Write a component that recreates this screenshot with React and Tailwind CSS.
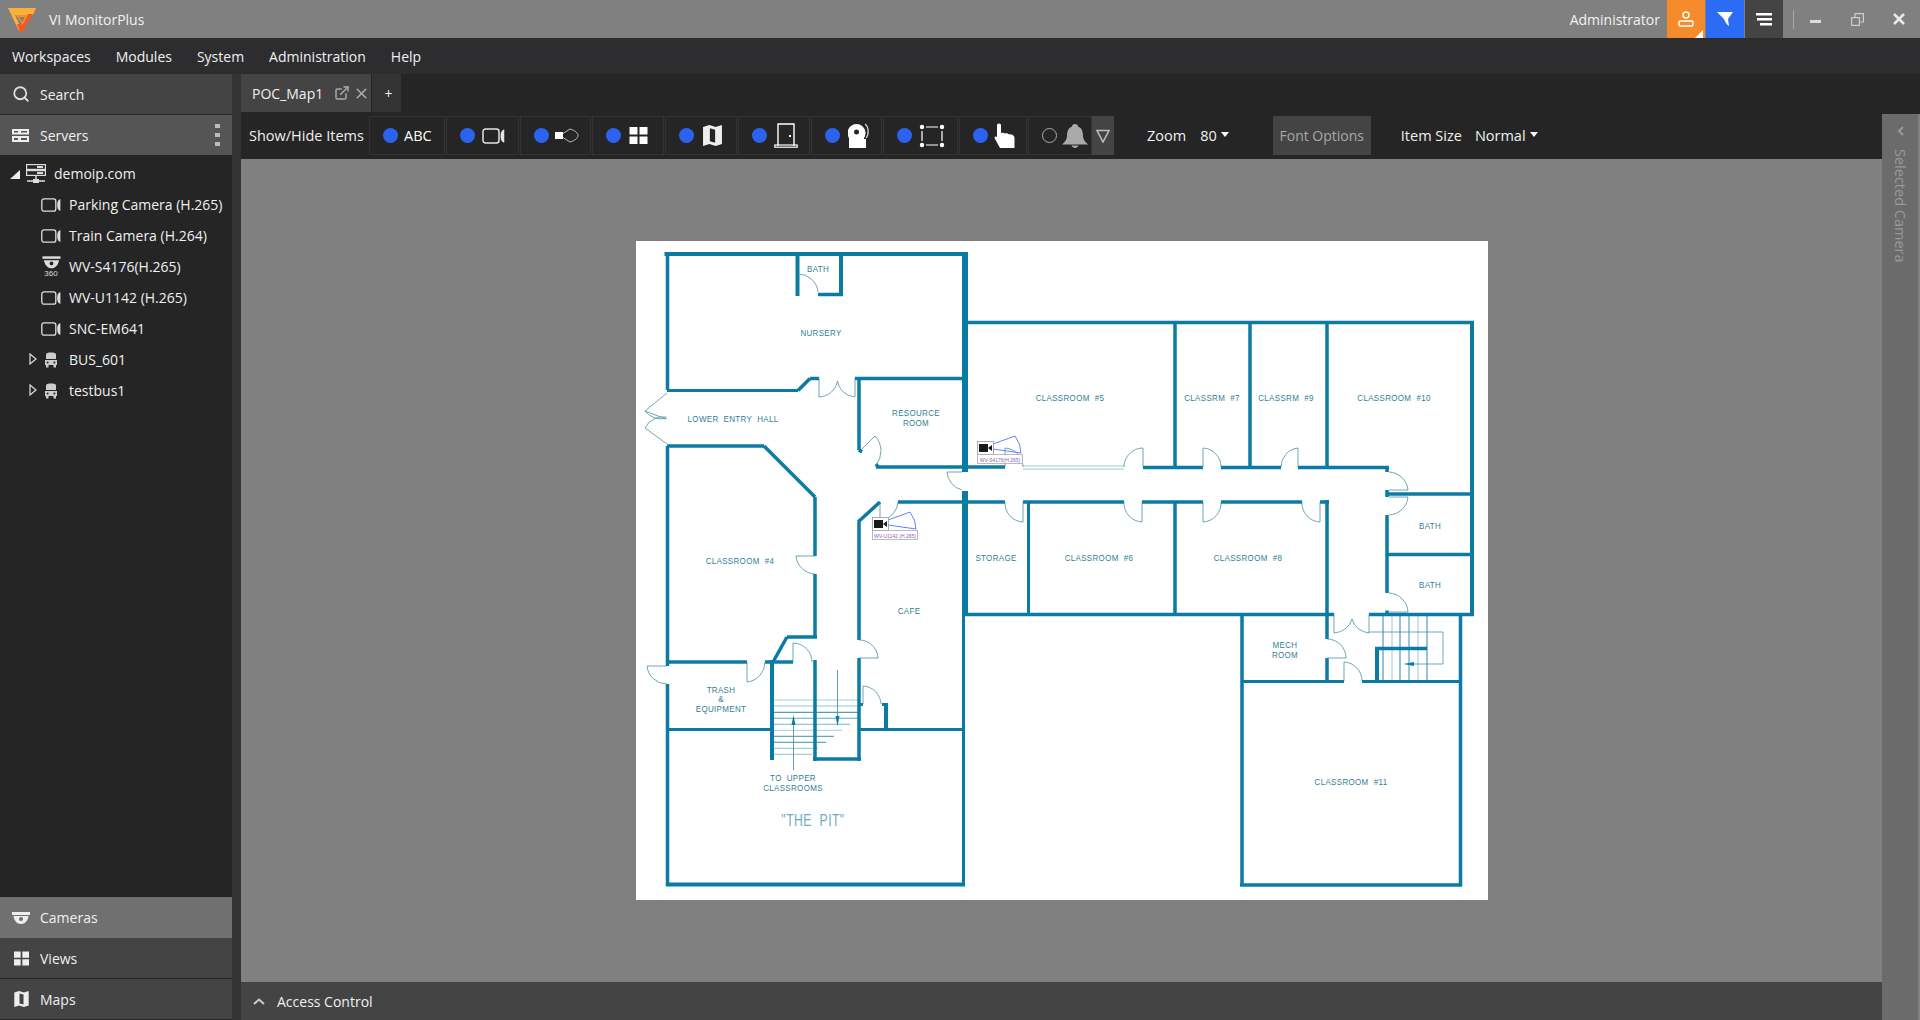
import { Search, X, ExternalLink } from 'lucide-react'

const font = { fontFamily: '"Open Sans", "Noto Sans", sans-serif' }

const teal = '#0b7ba3'
const ink = '#2f8096'

// thick wall segments: x1 y1 x2 y2 width
const walls = [
  [664.5, 254, 968, 254, 4], [667.5, 252, 667.5, 390, 3.5], [965, 252, 965, 472, 6], [965, 491, 965, 615, 6],
  [963.5, 615, 963.5, 886, 3], [797.5, 254, 797.5, 296, 4], [841, 254, 841, 296, 4], [818, 294.5, 843, 294.5, 3.5],
  [667, 390.5, 798, 390.5, 3], [798, 390.5, 810, 378.5, 3.5], [810, 378.5, 819, 378.5, 3.5], [855, 378.5, 965, 378.5, 3.5],
  [859, 378, 859, 450, 3.5], [859, 450, 862, 452, 3.5], [876, 467, 1005, 467, 3.5], [876, 464, 878, 467, 3.5],
  [667, 446, 764, 446, 3.5], [764, 446, 815, 497, 3.5], [815, 497, 815, 556, 3.5], [815, 574, 815, 638, 3.5],
  [787, 637, 817, 637, 3.5], [787, 637, 773, 662, 3.5], [772, 660, 772, 760, 4], [667, 662, 747, 662, 3.5], [765, 662, 793, 662, 3.5],
  [815, 660, 815, 761, 3.5], [813, 759, 861, 759, 3.5], [859, 658, 859, 761, 3.5], [859, 522, 859, 640, 3.5],
  [880, 502, 858, 522, 3.5], [667.5, 446, 667.5, 666, 3.5], [667.5, 684, 667.5, 886, 3.5], [667, 729.5, 772, 729.5, 3],
  [860, 729.5, 963, 729.5, 3], [886, 704, 886, 729, 4], [882, 704.5, 888, 704.5, 3], [860, 704.5, 863, 704.5, 3],
  [666, 884.5, 965, 884.5, 4],
  [968, 322.5, 1474, 322.5, 3.5], [1472, 321, 1472, 616, 4], [1175, 322, 1175, 467, 3.5], [1250, 322, 1250, 467, 3.5], [1327, 322, 1327, 467, 3.5],
  [1143, 467.5, 1203, 467.5, 3.5], [1221, 467.5, 1281, 467.5, 3.5], [1298, 467.5, 1389, 467.5, 3.5], [1387, 466, 1387, 472, 3.5],
  [1387, 490, 1387, 497, 3.5], [1387, 494, 1472, 494, 3.5], [1387, 515, 1387, 593, 3.5], [1387, 554.5, 1472, 554.5, 3.5],
  [898, 502, 1005, 502, 3.5], [1023, 502, 1124, 502, 3.5], [1142, 502, 1203, 502, 3.5], [1221, 502, 1302, 502, 3.5], [1320, 502, 1329, 502, 3.5],
  [1327, 500, 1327, 639, 3.5], [1028.5, 502, 1028.5, 614, 3], [1175, 502, 1175, 614, 3.5],
  [963, 614.5, 1334, 614.5, 3.5], [1369, 614.5, 1474, 614.5, 3.5], [1387, 610.5, 1387, 614, 3.5],
  [1242, 614, 1242, 886, 3.5], [1460.5, 614, 1460.5, 886, 3.5], [1240, 885, 1462, 885, 3.5],
  [1242, 681.5, 1344, 681.5, 3], [1362, 681.5, 1460, 681.5, 3], [1327, 658, 1327, 681, 3.5],
  [1377, 647, 1377, 681, 4], [1375, 648.5, 1427, 648.5, 3.5],
]

// thin door leaves and arcs
const doors = [
  'M798 274 A20 20 0 0 1 818 292', 'M819 378 V397 A20 18 0 0 0 837.5 381 A20 18 0 0 0 855 397 V378',
  'M861 450 L875 436 A22 22 0 0 1 876 465', 'M947 472 H962 M947 472 A20 20 0 0 0 962 490',
  'M1005 467 V448 A19 19 0 0 1 1023 467', 'M1143 467 V448 A19 19 0 0 0 1124 467', 'M1203 467 V448 A19 19 0 0 1 1221 467',
  'M1298 467 V448 A19 19 0 0 0 1281 467', 'M1005 502 A19 19 0 0 0 1023 522 V502', 'M1124 502 A19 19 0 0 0 1142 522 V502',
  'M1203 502 V522 A19 19 0 0 0 1221 502', 'M1302 502 A19 19 0 0 0 1320 522 V502',
  'M880 502 V518', 'M898 502 A20 20 0 0 1 883 520', 'M796 556 H815 M796 556 A20 20 0 0 0 815 574',
  'M747 662 V682 A20 20 0 0 0 765 662', 'M793 662 V643 A19 19 0 0 1 812 662', 'M859 640 A19 19 0 0 1 878 658 H859',
  'M863 704 V686 A19 19 0 0 1 881 704', 'M667 666 H647 A20 20 0 0 0 667 684',
  'M667 393 L645 411 L666 419 M645 411 A20 20 0 0 0 667 418 M667 444 L645 428 A20 20 0 0 1 666 417',
  'M1389 472 A20 20 0 0 1 1408 490 H1389', 'M1389 497 H1408 A20 20 0 0 1 1389 515', 'M1389 593 A20 20 0 0 1 1408 612 H1389',
  'M1334 614 V633 A20 18 0 0 0 1352 619 A20 18 0 0 0 1369 633 V614', 'M1327 639 A19 19 0 0 1 1346 658 H1327', 'M1344 681 V662 A19 19 0 0 1 1362 681',
]

const stairs = [
  [700, 859, 0.4], [706, 859, 0.5], [712.3, 859, 1], [718.3, 859, 0.7], [724.3, 850, 0.6],
  [730.3, 842, 0.4], [736.3, 834, 0.9], [742.3, 826, 0.9], [748.3, 818, 0.5], [754.3, 812, 0.5],
]

const stairsEast = [[1383, 1], [1392, 0.45], [1400, 1], [1409, 0.9], [1418, 0.45], [1427, 1]]

const labels = [
  ['BATH', 818, 268], ['NURSERY', 821, 332], ['LOWER  ENTRY  HALL', 733, 418], ['RESOURCE', 916, 412], ['ROOM', 916, 422],
  ['CLASSROOM  #5', 1070, 397], ['CLASSRM  #7', 1212, 397], ['CLASSRM  #9', 1286, 397], ['CLASSROOM  #10', 1394, 397],
  ['STORAGE', 996, 557], ['CLASSROOM  #6', 1099, 557], ['CLASSROOM  #8', 1248, 557], ['BATH', 1430, 525], ['BATH', 1430, 584],
  ['CLASSROOM  #4', 740, 560], ['CAFE', 909, 610], ['TRASH', 721, 689], ['&', 721, 698], ['EQUIPMENT', 721, 708],
  ['TO  UPPER', 793, 777], ['CLASSROOMS', 793, 787], ['MECH', 1285, 644], ['ROOM', 1285, 654], ['CLASSROOM  #11', 1351, 781],
]

function MapCamera({ x, y, name }) {
  return (
    <g>
      <path d={`M${x + 16} ${y + 3} L${x + 38} ${y - 5} Q${x + 44} ${y + 3} ${x + 44} ${y + 12} L${x + 16} ${y + 8}`} fill="none" stroke="#5b84ff" strokeWidth="1" />
      <rect x={x + 0.5} y={y + 0.5} width="16" height="13" fill="#fff" stroke="#999" strokeWidth="0.8" />
      <rect x={x + 2} y={y + 3} width="9" height="8" fill="#1a1a1a" />
      <path d={`M${x + 11} ${y + 7} L${x + 15} ${y + 4} V${y + 10} Z`} fill="#1a1a1a" />
      <rect x={x + 0.5} y={y + 13.5} width="45" height="9" fill="#fff" stroke="#aaa" strokeWidth="0.8" />
      <text x={x + 23} y={y + 20.5} textAnchor="middle" fontSize="5" fill="#8a5fb0" fontFamily="Liberation Sans, sans-serif">{name}</text>
    </g>
  )
}

function FloorPlan() {
  return (
    <svg viewBox="636 241 852 659" className="w-[852px] h-[659px] bg-white shrink-0">
      <path d="M1023 466 H1124 M1023 469 H1124" stroke="#9cc9d6" strokeWidth="1.2" fill="none" />
      {walls.map(([x1, y1, x2, y2, w], i) => (
        <line key={i} x1={x1} y1={y1} x2={x2} y2={y2} stroke={teal} strokeWidth={w} />
      ))}
      {doors.map((d, i) => (
        <path key={i} d={d} fill="none" stroke="#4b8fa3" strokeWidth="0.8" />
      ))}
      {stairs.map(([y, x2, o], i) => (
        <line key={i} x1="774" y1={y} x2={x2} y2={y} stroke={teal} strokeWidth="0.9" opacity={o} />
      ))}
      {stairsEast.map(([x, o], i) => (
        <line key={i} x1={x} y1="616" x2={x} y2="680" stroke={teal} strokeWidth="0.9" opacity={o} />
      ))}
      <path d="M837.5 670 V725 M793.5 725 V770" stroke="#3d8aa0" strokeWidth="0.8" fill="none" />
      <path d="M835.5 716 H839.5 L837.5 726 Z M791.5 725 H795.5 L793.5 715 Z" fill={teal} />
      <path d="M1369 632 H1443 V664 H1405" stroke="#4b8fa3" strokeWidth="0.8" fill="none" />
      <path d="M1404 664 L1414 662 V666 Z" fill={teal} />
      {labels.map(([t, x, y], i) => (
        <text key={i} transform={`translate(${x} ${y + 3.5}) scale(0.84 1)`} textAnchor="middle" fontSize="9.5" letterSpacing="0.4" fill={ink} fontFamily="Liberation Sans, sans-serif" xmlSpace="preserve">{t}</text>
      ))}
      <text transform="translate(813 826) scale(0.72 1)" textAnchor="middle" fontSize="17" letterSpacing="0.6" fill="#6cadbf" fontFamily="Liberation Sans, sans-serif" xmlSpace="preserve">"THE  PIT"</text>
      <MapCamera x={977} y={441} name="WV-S4176(H.265)" />
      <MapCamera x={872} y={517} name="WV-U1142 (H.265)" />
    </svg>
  )
}

function Logo() {
  return (
    <svg width="29" height="25" viewBox="0 0 29 25" className="shrink-0">
      <path d="M0 1 H28 L25 8 H7 L13 21 L11 24 Z" fill="#fbb03b" />
      <path d="M28 1 L15 25 H12 L9 17 L13 17 L20 7 H25 Z" fill="#f15a24" />
      <path d="M8 8 H20 L14.5 18 Z" fill="#f7931e" />
      <path d="M11 10 H17 L14 15 Z" fill="#808080" />
    </svg>
  )
}

function CamIcon({ className = 'w-5 h-3.5' }) {
  return (
    <svg viewBox="0 0 20 14" className={className}>
      <rect x="0.8" y="0.8" width="14" height="12.4" rx="2.2" fill="none" stroke="currentColor" strokeWidth="1.3" />
      <path d="M19.4 1 V13 C16.6 12 16.2 9.5 16.2 7 C16.2 4.5 16.6 2 19.4 1 Z" fill="currentColor" />
    </svg>
  )
}

function BusIcon() {
  return (
    <svg viewBox="0 0 14 16" className="w-3.5 h-4 text-[#ccc]">
      <path d="M2 2.5 C2 1 4 0.5 7 0.5 C10 0.5 12 1 12 2.5 V7 H2 Z M1 8 H13 V13 H12 V15.5 H9.5 V13 H4.5 V15.5 H2 V13 H1 Z" fill="currentColor" />
      <circle cx="3.6" cy="10.5" r="1" fill="#252525" />
      <circle cx="10.4" cy="10.5" r="1" fill="#252525" />
    </svg>
  )
}

function Dome360() {
  return (
    <div className="w-5 flex flex-col items-center leading-none text-[#ddd]">
      <svg viewBox="0 0 20 13" className="w-[19px] h-[13px]">
        <rect x="0.5" y="0" width="19" height="2.6" fill="currentColor" />
        <path d="M2 4 H18 C17 9 14 12.5 10 12.5 C6 12.5 3 9 2 4 Z" fill="currentColor" />
        <circle cx="10" cy="7.5" r="2" fill="#252525" />
      </svg>
      <span className="text-[8px] mt-px font-['Liberation_Sans']">360</span>
    </div>
  )
}

function ServerTreeIcon() {
  return (
    <svg viewBox="0 0 20 20" className="w-5 h-5 text-[#ddd]">
      <g fill="none" stroke="currentColor" strokeWidth="1.2">
        <rect x="0.6" y="0.6" width="18.8" height="4.8" />
        <rect x="0.6" y="6.6" width="18.8" height="4.8" />
      </g>
      <rect x="11" y="2" width="6" height="2" fill="currentColor" />
      <rect x="11" y="8" width="6" height="2" fill="currentColor" />
      <path d="M10 11.5 V16 M1 17 H19" stroke="currentColor" strokeWidth="1.5" />
      <rect x="7" y="15" width="6" height="4" fill="currentColor" />
    </svg>
  )
}

function TreeRow({ icon, label, arrow }) {
  return (
    <div className="h-[31px] flex items-center relative pl-[41px] text-[14px] text-[#f0f0f0]">
      {arrow && (
        <svg viewBox="0 0 8 12" className="absolute left-[29px] top-[9px] w-2 h-3">
          <path d="M1 1 L7 6 L1 11 Z" fill="none" stroke="#ddd" strokeWidth="1.2" />
        </svg>
      )}
      <span className="w-5 flex justify-center text-[#ddd]">{icon}</span>
      <span className="ml-2">{label}</span>
    </div>
  )
}

function SideTab({ icon, label, bg, border, h = 'h-[41px]' }) {
  return (
    <div className={`${h} flex items-center text-[14px] text-[#f0f0f0] shrink-0 ${bg} ${border ? 'border-b border-[#252525]' : ''}`}>
      <span className="w-10 flex justify-center pl-0.5 shrink-0">{icon}</span>
      {label}
    </div>
  )
}

function Dot({ off }) {
  return off
    ? <span className="w-[15px] h-[15px] rounded-full border border-[#aaa] shrink-0" />
    : <span className="w-[15px] h-[15px] rounded-full bg-[#2b63f0] shrink-0" />
}

function ToggleBox({ w, children, off }) {
  return (
    <div className={`${w} h-[39px] border border-[#333] flex items-center pl-[13px] gap-[6px] text-white shrink-0`}>
      <Dot off={off} />
      {children}
    </div>
  )
}

const ViewsIcon = ({ className }) => (
  <svg viewBox="0 0 18 17" className={className}>
    <path d="M0 0 H8 V7.5 H0 Z M10 0 H18 V7.5 H10 Z M0 9.5 H8 V17 H0 Z M10 9.5 H18 V17 H10 Z" fill="currentColor" />
  </svg>
)

const MapIcon = ({ className }) => (
  <svg viewBox="0 0 18 20" className={className}>
    <path d="M0 2 L6 0 L12 2 L18 0 V18 L12 20 L6 18 L0 20 Z M6.5 3 V15.5 L11.5 17 V4.5 Z" fill="currentColor" fillRule="evenodd" />
  </svg>
)

const Caret = () => <span className="w-0 h-0 border-x-[4.5px] border-x-transparent border-t-[5px] border-t-white inline-block ml-1 mb-0.5" />

function Toolbar() {
  return (
    <div className="h-[45px] bg-[#252525] flex items-start pt-0.5 pl-2 text-[14.5px] text-[#f0f0f0] shrink-0">
      <span className="w-[120px] h-[39px] flex items-center shrink-0">Show/Hide Items</span>
      <div className="flex gap-px">
        <ToggleBox w="w-[76px]"><span>ABC</span></ToggleBox>
        <ToggleBox w="w-[73px]"><CamIcon className="w-[25px] h-[16px] text-[#e4e4e4]" /></ToggleBox>
        <ToggleBox w="w-[71px]">
          <svg viewBox="0 0 24 17" className="w-6 h-[17px]">
            <rect x="0" y="5" width="8" height="7" fill="#fff" />
            <path d="M8 6.5 L15 2 C20 3.5 23 6 23 8.5 C23 11 20 13.5 15 15 L8 10.5" fill="none" stroke="#ccc" strokeWidth="0.9" />
          </svg>
        </ToggleBox>
        <ToggleBox w="w-[72px]"><ViewsIcon className="w-[19px] h-[17px] ml-[2px]" /></ToggleBox>
        <ToggleBox w="w-[72px]"><MapIcon className="w-[19px] h-[21px] ml-[3px] text-[#eee]" /></ToggleBox>
        <ToggleBox w="w-[72px]">
          <svg viewBox="0 0 24 25" className="w-6 h-[25px] ml-px">
            <path d="M4 23 V1 H20 V23" fill="none" stroke="#fff" strokeWidth="1.4" />
            <rect x="0.8" y="22" width="22.4" height="2.2" fill="none" stroke="#fff" strokeWidth="1.2" />
            <rect x="15" y="12" width="2" height="2" fill="#fff" />
          </svg>
        </ToggleBox>
        <ToggleBox w="w-[71px]">
          <svg viewBox="0 0 22 25" className="w-[22px] h-[25px] ml-[2px]">
            <path d="M1 25 V15 A9 9 0 1 1 16 15 V16 H18 V25 Z" fill="#fff" />
            <circle cx="8.5" cy="9" r="2.5" fill="#252525" />
            <path d="M17 1 C21 4 21 12 18 15" fill="none" stroke="#ccc" strokeWidth="1.3" />
          </svg>
        </ToggleBox>
        <ToggleBox w="w-[75px]">
          <svg viewBox="0 0 28 24" className="w-7 h-6">
            <path d="M4 7 V17 M24 7 V17 M8 3 H20 M8 21 H20" stroke="#fff" strokeWidth="1.2" fill="none" />
            <g fill="#fff"><circle cx="4" cy="3" r="2.2" /><circle cx="24" cy="3" r="2.2" /><circle cx="4" cy="21" r="2.2" /><circle cx="24" cy="21" r="2.2" /></g>
          </svg>
        </ToggleBox>
        <ToggleBox w="w-[68px]">
          <svg viewBox="0 0 21 25" className="w-[21px] h-[25px]">
            <path d="M5 0.5 C6.4 0.5 7 1.3 7 2.5 V10 C8.5 9.5 10 9.6 11 10.6 C12.5 10 14 10.4 15 11.4 C17 11 20.5 12 20.5 15 V25 H6 L0.5 15 C0.3 13.5 2 12.8 3 14 V2.5 C3 1.3 3.7 0.5 5 0.5 Z" fill="#fff" />
          </svg>
        </ToggleBox>
        <div className="flex h-[39px] shrink-0">
          <div className="w-[64px] border border-[#333] flex items-center pl-[13px] gap-[5px]">
            <Dot off />
            <svg viewBox="0 0 26 24" className="w-[26px] h-6 shrink-0">
              <path d="M13 0 C15 0 16 1.2 16 2.5 C20 4 21 8 21 12 C21 15 23 18 26 20.5 H0 C3 18 5 15 5 12 C5 8 6 4 10 2.5 C10 1.2 11 0 13 0 Z M9.5 21.5 H16.5 C16 23 14.5 24 13 24 C11.5 24 10 23 9.5 21.5 Z" fill="#aaa" />
            </svg>
          </div>
          <div className="w-[22px] bg-[#444] flex items-center justify-center">
            <svg viewBox="0 0 14 14" className="w-3.5 h-3.5">
              <path d="M1 1.5 H13 L7 13 Z" fill="none" stroke="#bbb" strokeWidth="1.6" />
            </svg>
          </div>
        </div>
      </div>
      <div className="h-[39px] flex items-center ml-[33px]">
        Zoom
        <span className="ml-[14px]">80</span>
        <Caret />
      </div>
      <div className="w-[98px] h-[39px] ml-[44px] bg-[#444] text-[#a8a8a8] flex items-center justify-center text-[14px]">Font Options</div>
      <div className="h-[39px] flex items-center ml-[30px]">
        Item Size
        <span className="ml-[13px]">Normal</span>
        <Caret />
      </div>
    </div>
  )
}

export default function App() {
  return (
    <div className="w-[1920px] h-[1020px] overflow-hidden bg-[#808080] flex flex-col" style={font}>
      <header className="h-[38px] flex items-center shrink-0 text-[14px] text-[#f2f2f2]">
        <div className="ml-2"><Logo /></div>
        <span className="ml-3">VI MonitorPlus</span>
        <span className="ml-auto mr-[7px]">Administrator</span>
        <div className="relative w-[38px] h-[38px] bg-[#f68b2c] flex items-center justify-center">
          <svg viewBox="0 0 16 16" className="w-4 h-4">
            <circle cx="8" cy="4" r="3" fill="none" stroke="#fff" strokeWidth="1.5" />
            <rect x="1" y="10" width="14" height="5" rx="1.5" fill="none" stroke="#fff" strokeWidth="1.5" />
          </svg>
          <span className="absolute right-0.5 bottom-0 w-0 h-0 border-l-[8px] border-l-transparent border-b-[8px] border-b-white" />
        </div>
        <div className="w-[38px] h-[38px] ml-px bg-[#2b6bf5] flex items-center justify-center">
          <svg viewBox="0 0 16 16" className="w-4 h-4">
            <path d="M0 1 H16 L11 8 L12 15 C9 13 7.5 9 7 8 Z" fill="#fff" />
          </svg>
        </div>
        <div className="w-[38px] h-[38px] ml-px bg-[#444] flex items-center justify-center">
          <svg viewBox="0 0 16 13" className="w-4 h-[13px]">
            <path d="M0 0 H16 V2.4 H0 Z M1 5 H16 V7.4 H1 Z M4 10 H16 V12.4 H4 Z" fill="#fff" />
          </svg>
        </div>
        <span className="w-px h-[19px] bg-[#a8a8a8] ml-2.5" />
        <span className="w-[11px] h-[3px] bg-[#ddd] ml-4 mt-1" />
        <svg viewBox="0 0 13 13" className="w-[13px] h-[13px] ml-[30px]">
          <path d="M0.6 4.6 H8.4 V12.4 H0.6 Z M4 4 V0.6 H12.4 V9 H9" fill="none" stroke="#ccc" strokeWidth="1.2" />
        </svg>
        <svg viewBox="0 0 12 12" className="w-3 h-3 ml-[29px] mr-[15px]">
          <path d="M1 1 L11 11 M11 1 L1 11" stroke="#e8e8e8" strokeWidth="2.6" />
        </svg>
      </header>

      <nav className="h-9 bg-[#2d2d30] flex items-center gap-[25px] px-3 text-[14px] text-[#f0f0f0] shrink-0">
        <span>Workspaces</span>
        <span>Modules</span>
        <span>System</span>
        <span>Administration</span>
        <span>Help</span>
      </nav>

      <div className="flex-1 flex min-h-0">
        <aside className="w-[232px] bg-[#252525] flex flex-col shrink-0">
          <SideTab icon={<Search size={18} color="#ddd" strokeWidth={2.4} />} label="Search" bg="bg-[#444]" h="h-10" />
          <div className="h-10 mt-px bg-[#555] flex items-center text-[14px] text-[#f0f0f0] shrink-0">
            <span className="w-10 flex justify-center">
              <svg viewBox="0 0 17 13" className="w-[17px] h-[13px]">
                <path d="M0 0 H17 V5.6 H0 Z M0 7 H17 V13 H0 Z" fill="#eee" />
                <path d="M2 2 H6 V3.6 H2 Z M9 2 H15 V3.6 H9 Z M2 9 H6 V11 H2 Z M9 9 H15 V11 H9 Z" fill="#555" />
              </svg>
            </span>
            Servers
            <span className="ml-auto mr-3 flex flex-col gap-[5px]">
              <i className="w-[5px] h-[4px] bg-[#bbb] block" />
              <i className="w-[5px] h-[4px] bg-[#bbb] block" />
              <i className="w-[5px] h-[4px] bg-[#bbb] block" />
            </span>
          </div>
          <div className="pt-[3px] flex-1">
            <div className="h-[31px] flex items-center relative pl-[26px] text-[14px] text-[#f0f0f0]">
              <span className="absolute left-[10px] top-[12px] w-0 h-0 border-l-[10px] border-l-transparent border-b-[9px] border-b-[#eee]" />
              <ServerTreeIcon />
              <span className="ml-2">demoip.com</span>
            </div>
            <TreeRow icon={<CamIcon />} label="Parking Camera (H.265)" />
            <TreeRow icon={<CamIcon />} label="Train Camera (H.264)" />
            <TreeRow icon={<Dome360 />} label="WV-S4176(H.265)" />
            <TreeRow icon={<CamIcon />} label="WV-U1142 (H.265)" />
            <TreeRow icon={<CamIcon />} label="SNC-EM641" />
            <TreeRow icon={<BusIcon />} label="BUS_601" arrow />
            <TreeRow icon={<BusIcon />} label="testbus1" arrow />
          </div>
          <SideTab
            icon={
              <svg viewBox="0 0 18 12" className="w-[18px] h-3">
                <path d="M0 0 H18 V3 H0 Z M1.5 4 H16.5 C16 8.5 13 12 9 12 C5 12 2 8.5 1.5 4 Z" fill="#eee" />
                <circle cx="9" cy="7" r="2" fill="#707070" />
              </svg>
            }
            label="Cameras"
            bg="bg-[#707070]"
          />
          <SideTab icon={<ViewsIcon className="w-[15px] h-[15px] text-[#eee]" />} label="Views" bg="bg-[#444]" border />
          <SideTab icon={<MapIcon className="w-[15px] h-[16px] text-[#eee]" />} label="Maps" bg="bg-[#444]" border />
        </aside>

        <div className="w-[9px] bg-[#333] shrink-0" />

        <main className="flex-1 flex flex-col min-w-0">
          <div className="h-10 bg-[#252525] flex items-start shrink-0 text-[14px] text-[#f0f0f0]">
            <div className="w-[130px] h-[38px] bg-[#444] flex items-center pl-[11px]">
              POC_Map1
              <ExternalLink size={16} color="#aaa" strokeWidth={2.2} className="ml-[11px]" />
              <X size={17} color="#aaa" strokeWidth={2.2} className="ml-[3px]" />
            </div>
            <div className="w-[29px] h-[38px] ml-px bg-[#333] flex items-center justify-center pl-1">+</div>
          </div>
          <div className="flex-1 flex min-h-0">
            <div className="w-[1641px] flex flex-col shrink-0">
              <Toolbar />
              <div className="flex-1 flex items-center justify-center min-h-0">
                <FloorPlan />
              </div>
              <div className="h-[38px] bg-[#444] flex items-center text-[14px] text-[#f0f0f0] shrink-0">
                <svg viewBox="0 0 12 7" className="w-3 h-[7px] ml-[12px]">
                  <path d="M1 6 L6 1.5 L11 6" fill="none" stroke="#ccc" strokeWidth="2" />
                </svg>
                <span className="ml-3">Access Control</span>
              </div>
            </div>
            <div className="w-9 bg-[#6b6b6b] flex flex-col items-center pt-3 shrink-0">
              <svg viewBox="0 0 7 10" className="w-[7px] h-2.5">
                <path d="M6 1 L2 5 L6 9" fill="none" stroke="#9a9a9a" strokeWidth="2" />
              </svg>
              <span className="mt-[13px] text-[14.5px] text-[#9a9a9a] [writing-mode:vertical-rl]">Selected Camera</span>
            </div>
          </div>
        </main>
      </div>
    </div>
  )
}
